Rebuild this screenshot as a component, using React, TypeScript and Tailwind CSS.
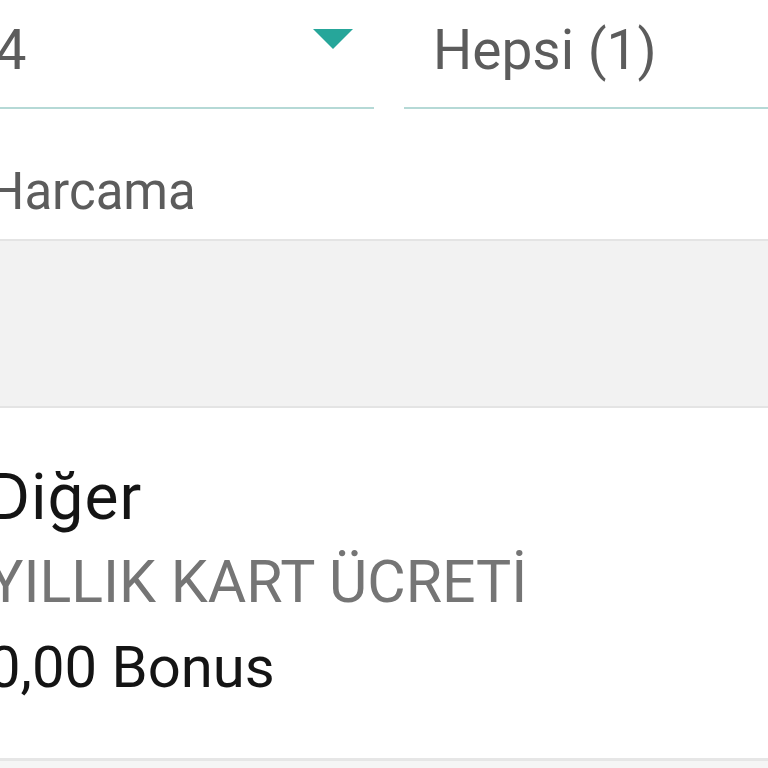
import React from "react";

export default function App() {
  return (
    <div
      className="w-[768px] h-[768px] overflow-hidden bg-white"
      style={{ fontFamily: "Roboto, 'Noto Sans', sans-serif" }}
    >
      <div className="flex h-[109px]">
        <div className="w-[374px] shrink-0 border-b-2 border-[#b5d9d6] flex items-start relative">
          <span className="text-[56px] leading-none text-[#5c5c5c] mt-[22px] -ml-[5px]">4</span>
          <svg
            className="absolute left-[313px] top-[29px]"
            width="40"
            height="21"
            viewBox="0 0 40 21"
          >
            <polygon points="0,0 40,0 20,20" fill="#26a69a" />
          </svg>
        </div>
        <div className="w-[30px] shrink-0" />
        <div className="flex-1 border-b-2 border-[#b5d9d6]">
          <div className="text-[55px] leading-none text-[#5c5c5c] mt-[23px] pl-[29px]">Hepsi (1)</div>
        </div>
      </div>
      <div className="h-[130px] flex items-start">
        <span className="text-[51px] leading-none text-[#5c5c5c] mt-[57px] -ml-[12px]">Harcama</span>
      </div>
      <div className="h-[169px] bg-[#f2f2f2] border-y-2 border-[#e4e4e4]" />
      <div className="h-[350px] flex flex-col">
        <div className="text-[64px] leading-none text-[#141414] mt-[58px] -ml-[12px] tracking-[1px]">Diğer</div>
        <div className="text-[59px] leading-none text-[#757575] mt-[22px] -ml-[12px] whitespace-nowrap">YILLIK KART ÜCRETİ</div>
        <div className="text-[58px] leading-none text-[#141414] mt-[27px] -ml-[12px]">0,00 Bonus</div>
      </div>
      <div className="h-[3px] bg-[#e6e6e6]" />
      <div className="h-[20px] bg-[#f5f5f5]" />
    </div>
  );
}
